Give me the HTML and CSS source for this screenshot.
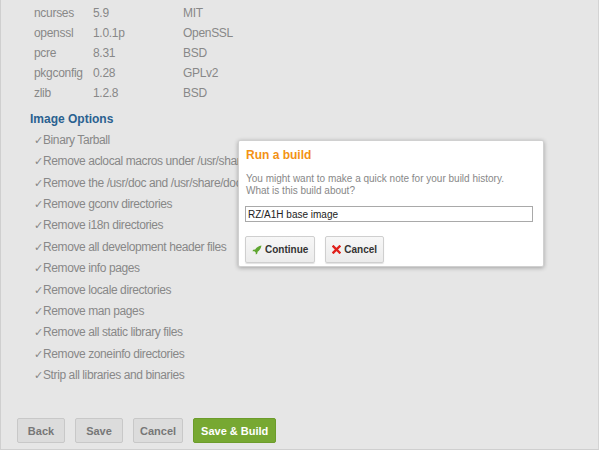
FILE: index.html
```html
<!DOCTYPE html>
<html>
<head>
  <title>Image Options</title>
  <link rel="stylesheet" href="styles.css">
</head>
<body>
  <div class="page">
    <table class="packages">
      <tr><td>ncurses</td><td>5.9</td><td>MIT</td></tr>
      <tr><td>openssl</td><td>1.0.1p</td><td>OpenSSL</td></tr>
      <tr><td>pcre</td><td>8.31</td><td>BSD</td></tr>
      <tr><td>pkgconfig</td><td>0.28</td><td>GPLv2</td></tr>
      <tr><td>zlib</td><td>1.2.8</td><td>BSD</td></tr>
    </table>

    <h3 class="section-title">Image Options</h3>
    <ul class="options">
      <li><span class="check">✓</span>Binary Tarball</li>
      <li><span class="check">✓</span>Remove aclocal macros under /usr/share/aclocal</li>
      <li><span class="check">✓</span>Remove the /usr/doc and /usr/share/doc directories</li>
      <li><span class="check">✓</span>Remove gconv directories</li>
      <li><span class="check">✓</span>Remove i18n directories</li>
      <li><span class="check">✓</span>Remove all development header files</li>
      <li><span class="check">✓</span>Remove info pages</li>
      <li><span class="check">✓</span>Remove locale directories</li>
      <li><span class="check">✓</span>Remove man pages</li>
      <li><span class="check">✓</span>Remove all static library files</li>
      <li><span class="check">✓</span>Remove zoneinfo directories</li>
      <li><span class="check">✓</span>Strip all libraries and binaries</li>
    </ul>

    <div class="actions">
      <button class="btn">Back</button>
      <button class="btn">Save</button>
      <button class="btn">Cancel</button>
      <button class="btn primary">Save &amp; Build</button>
    </div>

    <div class="dialog">
      <div class="dialog-title">Run a build</div>
      <p class="dialog-text">You might want to make a quick note for your build history.<br>What is this build about?</p>
      <input class="dialog-input" type="text" value="RZ/A1H base image">
      <div class="dialog-buttons">
        <button class="dbtn">
          <svg class="icon" width="10" height="10" viewBox="0 0 10 10">
            <path d="M9.5 0.5 C6.5 1 4.5 2.5 3.2 4.4 L1.2 4.8 L0.4 6.2 L2.4 6.3 L3.7 7.6 L3.8 9.6 L5.2 8.8 L5.6 6.8 C7.5 5.5 9 3.5 9.5 0.5 Z" fill="#5fa630"/>
          </svg>Continue
        </button>
        <button class="dbtn">
          <svg class="icon" width="9" height="9" viewBox="0 0 9 9">
            <path d="M1.5 1.5 L7.5 7.5 M7.5 1.5 L1.5 7.5" stroke="#e0201b" stroke-width="2.4" stroke-linecap="square"/>
          </svg>Cancel
        </button>
      </div>
    </div>
  </div>
</body>
</html>
```

FILE: styles.css
```css
html, body {
  margin: 0;
  padding: 0;
}

body {
  background-color: #fff;
  font-family: "Liberation Sans", Arial, sans-serif;
  color: #888;
}

.page {
  position: relative;
  width: 597px;
  height: 449px;
  background-color: #e6e6e6;
  border-left: 1px solid #cfcfcf;
  border-right: 1px solid #d4d4d4;
  border-bottom: 1px solid #cfcfcf;
  overflow: hidden;
}

.packages {
  border-collapse: collapse;
  margin: 3px 0 0 33px;
  font-size: 12px;
  letter-spacing: -0.3px;
}

.packages td {
  height: 20px;
  padding: 0;
  line-height: 20px;
}

.packages td:nth-child(1) {
  width: 59px;
}

.packages td:nth-child(2) {
  width: 90px;
}

.section-title {
  margin: 6px 0 0 29px;
  font-size: 12px;
  line-height: 20px;
  color: #2a6190;
}

.options {
  list-style: none;
  margin: 1px 0 0 0;
  padding: 0 0 0 33px;
  font-size: 12px;
  letter-spacing: -0.4px;
  white-space: nowrap;
}

.options li {
  height: 21.36px;
  line-height: 21.36px;
}

.options .check {
  display: inline-block;
  width: 9px;
  line-height: 1;
  font-size: 11px;
  font-family: "DejaVu Sans", sans-serif;
}

.actions {
  display: flex;
  gap: 10px;
  margin: 32px 0 0 16px;
}

.btn {
  min-width: 48px;
  height: 25px;
  padding: 0 6px;
  font-family: "Liberation Sans", Arial, sans-serif;
  font-size: 11px;
  font-weight: bold;
  color: #777;
  background-color: #dcdcdc;
  border: 1px solid #c8c8c8;
  border-radius: 2px;
}

.btn.primary {
  padding: 0 7px;
  color: #fff;
  background-color: #77a832;
  border-color: #6c9c2b;
}

.dialog {
  position: absolute;
  left: 237px;
  top: 140px;
  width: 290px;
  padding: 6px 8px 3px 6px;
  background-color: #fff;
  border: 1px solid #d0d0d0;
  border-radius: 2px;
  box-shadow: 0 1px 4px rgba(0, 0, 0, 0.3);
}

.dialog-title {
  padding-left: 1px;
  font-size: 12px;
  font-weight: bold;
  line-height: 16px;
  color: #f39214;
}

.dialog-text {
  margin: 10px 0 0 1px;
  font-size: 10px;
  line-height: 12px;
  color: #888;
}

.dialog-input {
  display: block;
  box-sizing: border-box;
  width: 288px;
  height: 16px;
  margin-top: 9px;
  padding: 0 2px;
  font-family: "Liberation Sans", Arial, sans-serif;
  font-size: 10px;
  color: #222;
  border: 1px solid #a9a9a9;
  border-radius: 0;
  outline: none;
}

.dialog-buttons {
  display: flex;
  gap: 10px;
  margin-top: 14px;
}

.dbtn {
  display: flex;
  align-items: center;
  gap: 3px;
  height: 27px;
  padding: 0 6px;
  font-family: "Liberation Sans", Arial, sans-serif;
  font-size: 10px;
  font-weight: bold;
  color: #333;
  background: linear-gradient(#f7f7f7, #ebebeb);
  border: 1px solid #cfcfcf;
  border-radius: 2px;
  box-shadow: 0 1px 1px rgba(0, 0, 0, 0.12);
}

.icon {
  display: block;
}
```
